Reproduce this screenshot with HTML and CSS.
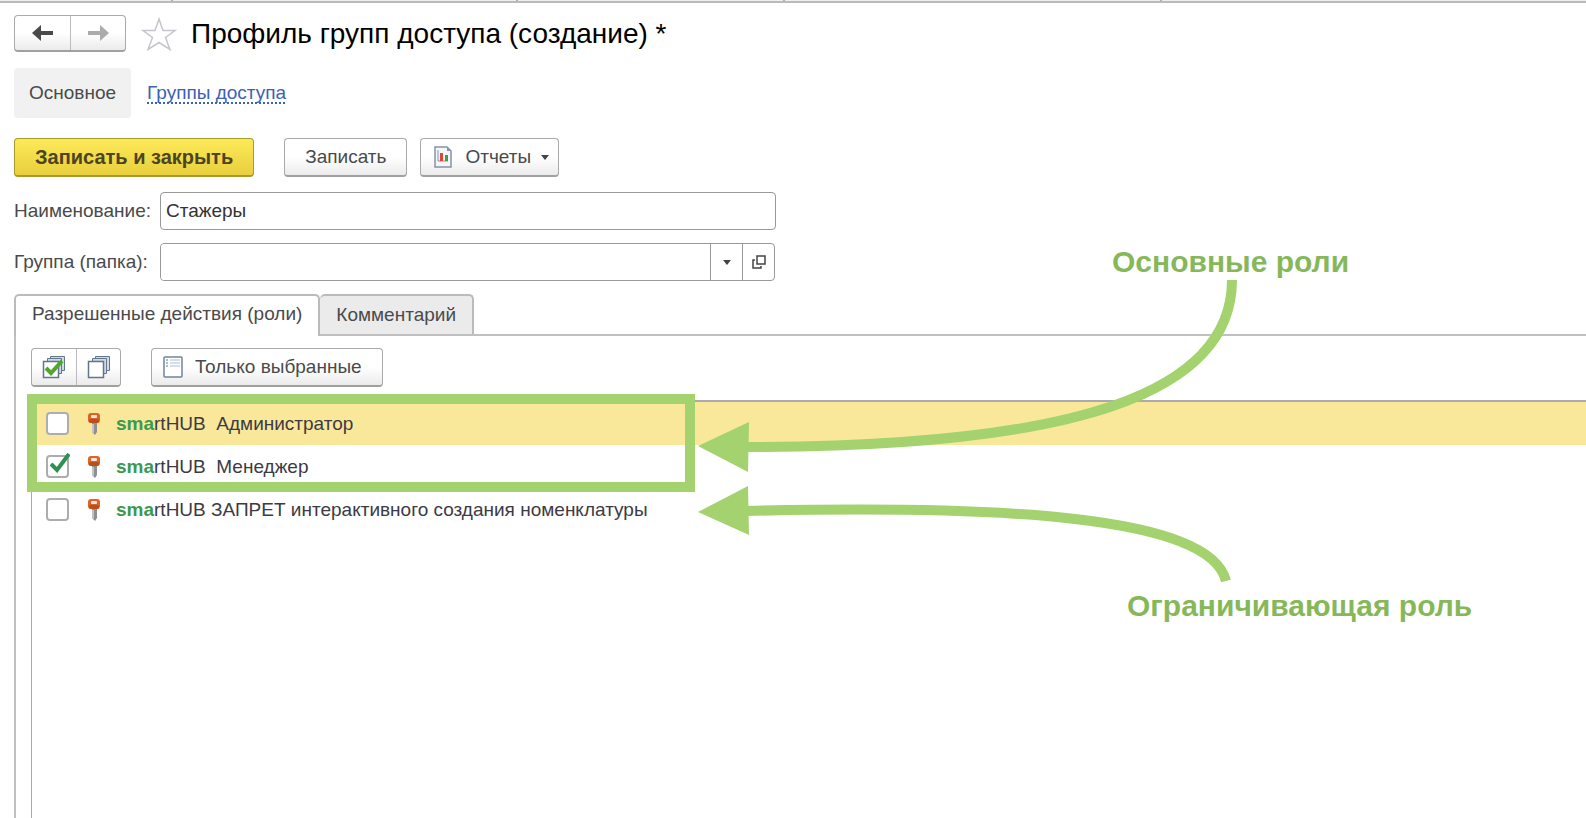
FILE: index.html
```html
<!DOCTYPE html>
<html lang="ru">
<head>
    <meta charset="UTF-8">
    <title>Профиль групп доступа (создание) *</title>
    <meta name="viewport" content="width=device-width, initial-scale=1.0">
    <link rel="stylesheet" href="styles.css">
</head>
<body>
    <svg class="symbols" aria-hidden="true">
        <symbol id="key" viewBox="0 0 14 22">
            <path d="M5 9h5v10l-2 3-3-3z" fill="#8f8f8f"/>
            <path d="M5 11h2v9l-2-1z" fill="#c4c4c4"/>
            <rect x="1" y="0" width="12" height="10" rx="3" fill="#d9652a"/>
            <rect x="2" y="6" width="10" height="4" rx="2" fill="#b94f1c"/>
            <rect x="4" y="2" width="6" height="3" rx="1" fill="#fbe3d3"/>
        </symbol>
    </svg>

    <div class="window-tabs"><i></i><i></i><i></i><i></i><i></i></div>

    <header class="header">
        <div class="group nav">
            <button type="button" aria-label="Назад">
                <svg width="22" height="16" viewBox="0 0 22 16"><path d="M0 8l9-8v6h12v4H9v6z" fill="#4a4a4a"/></svg>
            </button>
            <button type="button" aria-label="Вперед">
                <svg width="22" height="16" viewBox="0 0 22 16"><path d="M22 8l-9-8v6H1v4h12v6z" fill="#ababab"/></svg>
            </button>
        </div>
        <button type="button" class="star" aria-label="В избранное">
            <svg width="36" height="34" viewBox="0 0 36 34"><path d="M18 2l4 11.500h12L24.500 20.500l4.500 12L18 25.500 7 32.500l4.500-12L2 13.500h12z" fill="#fff" stroke="#c3c6cb" stroke-width="1.500"/></svg>
        </button>
        <h1>Профиль групп доступа (создание) *</h1>
    </header>

    <nav class="sections">
        <span class="current">Основное</span>
        <a href="#groups">Группы доступа</a>
    </nav>

    <div class="commands">
        <button type="submit" class="btn primary" form="profile">Записать и закрыть</button>
        <button type="button" class="btn">Записать</button>
        <button type="button" class="btn reports">
            <svg width="20" height="22" viewBox="0 0 20 22">
                <path d="M2 1h12l4 4v16H2z" fill="#f4f7fa" stroke="#8593a5" stroke-width="1.500"/>
                <path d="M14 1v4h4z" fill="#8593a5"/>
                <path d="M5 4v11h10" fill="none" stroke="#8593a5"/>
                <path d="M7 7h3v8H7z" fill="#e0453a"/>
                <path d="M12 9h3v6h-3z" fill="#4c9a3c"/>
            </svg>
            Отчеты
            <svg class="caret" width="8" height="5" viewBox="0 0 8 5"><path d="M0 0h8L4 5z" fill="#444"/></svg>
        </button>
    </div>

    <form id="profile" class="fields">
        <label for="name">Наименование:</label>
        <input type="text" id="name" value="Стажеры">
        <label for="folder">Группа (папка):</label>
        <div class="picker">
            <input type="text" id="folder">
            <button type="button" aria-label="Выбрать">
                <svg width="8" height="5" viewBox="0 0 8 5"><path d="M0 0h8L4 5z" fill="#444"/></svg>
            </button>
            <button type="button" aria-label="Открыть">
                <svg width="14" height="14" viewBox="0 0 14 14" fill="none" stroke="#444" stroke-width="1.500"><path d="M5 1h8v8H5z"/><path d="M3 5H1v8h8v-2"/></svg>
            </button>
        </div>
    </form>

    <div class="tabs">
        <button type="button" class="tab active">Разрешенные действия (роли)</button>
        <button type="button" class="tab">Комментарий</button>
    </div>

    <main class="panel">
        <div class="toolbar">
            <div class="group marks">
                <button type="button" aria-label="Установить все">
                    <svg width="24" height="24" viewBox="0 0 24 24">
                        <g fill="#d3dae3" stroke="#61758d">
                            <path d="M8.500 1.500h14v14h-14z"/><path d="M5.500 3.500h14v15h-14z"/>
                            <path d="M1.500 6.500h15v16h-15z" fill="#fff" stroke-width="1.500"/>
                        </g>
                        <path d="M4 13l5 5L20 6" fill="none" stroke="#4fa72d" stroke-width="4"/>
                    </svg>
                </button>
                <button type="button" aria-label="Снять все">
                    <svg width="24" height="24" viewBox="0 0 24 24" fill="#d3dae3" stroke="#61758d">
                        <path d="M8.500 1.500h14v14h-14z"/><path d="M5.500 3.500h14v15h-14z"/>
                        <path d="M1.500 6.500h15v16h-15z" fill="#fff" stroke-width="1.500"/>
                    </svg>
                </button>
            </div>
            <button type="button" class="btn selected-only">
                <svg width="20" height="22" viewBox="0 0 20 22" fill="none">
                    <rect x="1" y="1" width="18" height="20" rx="1" fill="#fff" stroke="#71849a" stroke-width="1.500"/>
                    <path d="M3 4h2M3 7h2M3 10h2" stroke="#5577a5"/>
                    <path d="M7 4h10M7 7h10M7 10h10" stroke="#a9bdd6"/>
                </svg>
                Только выбранные
            </button>
        </div>

        <ul class="roles">
            <li class="selected">
                <span class="check"><input type="checkbox" id="admin"></span>
                <svg class="key"><use href="#key"/></svg>
                <label for="admin"><b>sma</b>rtHUB&nbsp; Администратор</label>
            </li>
            <li>
                <span class="check">
                    <input type="checkbox" id="manager" checked>
                    <svg class="tick" viewBox="0 0 20 20"><path d="M1 11l6 6L19 1" fill="none" stroke="#2f9150" stroke-width="4"/></svg>
                </span>
                <svg class="key"><use href="#key"/></svg>
                <label for="manager"><b>sma</b>rtHUB&nbsp; Менеджер</label>
            </li>
            <li>
                <span class="check"><input type="checkbox" id="deny"></span>
                <svg class="key"><use href="#key"/></svg>
                <label for="deny"><b>sma</b>rtHUB ЗАПРЕТ интерактивного создания номенклатуры</label>
            </li>
        </ul>
    </main>

    <!-- пояснения поверх формы -->
    <div class="notes">
        <div class="frame"></div>
        <svg class="arrows" width="560" height="320" viewBox="690 275 560 320">
            <g fill="none" stroke="#a3d26f" stroke-width="10">
                <path d="M745 447C1080 447 1232 392 1232 280"/>
                <path d="M745 511C1000 505 1210 515 1226 581"/>
            </g>
            <path d="M698 446l51-24-1 50zM698 512l50-26 1 49z" fill="#a3d26f"/>
        </svg>
        <p class="note note-main">Основные роли</p>
        <p class="note note-deny">Ограничивающая роль</p>
    </div>
</body>
</html>
```
FILE: styles.css
```css
* { box-sizing: border-box; }
html, body { height: 100%; }
body {
    display: flex;
    flex-direction: column;
    position: relative;
    margin: 0;
    overflow: hidden;
    background: #fff;
    color: #4a4a4a;
    font-family: "Liberation Sans", Arial, sans-serif;
    font-size: 19px;
}
button, input { font: inherit; color: inherit; }
button { cursor: pointer; }
svg { display: block; flex: none; }
.symbols { position: absolute; width: 0; height: 0; }

.window-tabs {
    display: grid;
    grid-template-columns: 11fr 22fr 17fr 24fr 27fr;
    height: 3px;
    background: #eee;
    border-bottom: 2px solid #b9bbb9;
}
.window-tabs i { border-right: 2px solid #b0b0b0; }
.window-tabs i:last-child { border: 0; }

.header {
    display: flex;
    align-items: center;
    height: 37px;
    margin: 12px 14px 0;
}
h1 {
    margin: 0 0 0 14px;
    color: #000;
    font-size: 28px;
    font-weight: normal;
    white-space: nowrap;
}
.star { margin-left: 15px; padding: 0; border: 0; background: none; }

.group, .btn {
    border: 1px solid #aaa;
    border-bottom: 2px solid #a0a0a0;
    border-radius: 4px;
    background: linear-gradient(#fff 50%, #ebebeb);
}
.group { display: flex; }
.group button {
    display: flex;
    align-items: center;
    justify-content: center;
    padding: 0;
    border: 0;
    background: none;
}
.group button + button { border-left: 1px solid #bbb; }
.nav { height: 37px; }
.nav button { width: 55px; }

.sections {
    display: flex;
    align-items: center;
    gap: 16px;
    margin: 16px 14px 0;
}
.current {
    padding: 0 15px;
    border-radius: 4px;
    background: #f1f1f1;
    line-height: 50px;
}
.sections a {
    color: #3b62b5;
    text-decoration: underline dotted 2px;
    text-underline-offset: 3px;
    text-decoration-skip-ink: none;
}

.commands { display: flex; margin: 20px 14px 0; }
.btn {
    display: flex;
    align-items: center;
    justify-content: center;
    height: 39px;
    padding: 0 20px;
    white-space: nowrap;
}
.commands .btn + .btn { margin-left: 13px; }
.commands .primary + .btn { margin-left: 30px; }
.primary {
    border-color: #a99a2c;
    background: linear-gradient(#fde958, #e8cf3d);
    color: #4d4520;
    font-size: 20px;
    font-weight: bold;
}
.reports { gap: 12px; padding: 0 9px 0 12px; }
.reports .caret { margin-left: -2px; }

.fields {
    display: grid;
    grid-template-columns: 146px minmax(0, 616px);
    gap: 13px 0;
    align-items: center;
    margin: 15px 14px 0;
}
.fields label { white-space: nowrap; }
.fields input {
    width: 100%;
    height: 38px;
    padding: 0 5px;
    border: 1px solid #999;
    border-radius: 4px;
    background: #fff;
    color: #333;
}
.picker {
    display: flex;
    height: 38px;
    margin-right: 1px;
    border: 1px solid #999;
    border-radius: 4px;
}
.picker input { flex: 1; height: 36px; border: 0; }
.picker button {
    display: flex;
    align-items: center;
    justify-content: center;
    width: 32px;
    padding: 0;
    border: 0;
    border-left: 1px solid #999;
    background: none;
}

.tabs {
    display: flex;
    margin: 13px 0 0 14px;
    border-bottom: 2px solid #c0c0c0;
}
.tab {
    height: 40px;
    padding: 0 16px;
    border: 2px solid #bbb;
    border-bottom: 0;
    border-radius: 5px 5px 0 0;
    background: #ebebeb;
    white-space: nowrap;
}
.tab + .tab { border-left: 0; }
.active { margin-bottom: -2px; height: 42px; padding-bottom: 4px; background: #fff; }

.panel {
    display: flex;
    flex: 1;
    flex-direction: column;
    margin-left: 14px;
    border-left: 2px solid #c0c0c0;
    padding-left: 15px;
}
.toolbar { display: flex; gap: 30px; margin: 12px 0 13px; }
.marks button { width: 44px; }
.selected-only { gap: 12px; padding: 0 20px 0 11px; }

.roles {
    flex: 1;
    margin: 0;
    padding: 0;
    border: 1px solid #aaa;
    border-width: 2px 0 0 1px;
    list-style: none;
}
.roles li {
    display: flex;
    align-items: center;
    height: 43px;
    padding-left: 14px;
    color: #3d3a44;
}
.roles .selected { background: #f9e79a; }
.roles b { color: #3a9a52; }
.roles label { white-space: nowrap; }
.check { position: relative; }
.check input {
    display: block;
    appearance: none;
    width: 23px;
    height: 23px;
    margin: 0;
    border: 2px solid #adadad;
    border-radius: 4px;
    background: #fff;
}
.tick { position: absolute; top: -2px; left: 4px; width: 20px; height: 20px; }
.key { width: 14px; height: 22px; margin: 0 15px 0 18px; }

.notes { position: absolute; inset: 0; pointer-events: none; }
.frame {
    position: absolute;
    top: 394px;
    left: 27px;
    width: 668px;
    height: 98px;
    border: 10px solid #a3d26f;
}
.arrows { position: absolute; top: 275px; left: 690px; }
.note {
    position: absolute;
    margin: 0;
    color: #86b85a;
    font-size: 30px;
    font-weight: bold;
    line-height: 34px;
    white-space: nowrap;
}
.note-main { top: 245px; left: 1112px; }
.note-deny { top: 589px; left: 1127px; }
```
